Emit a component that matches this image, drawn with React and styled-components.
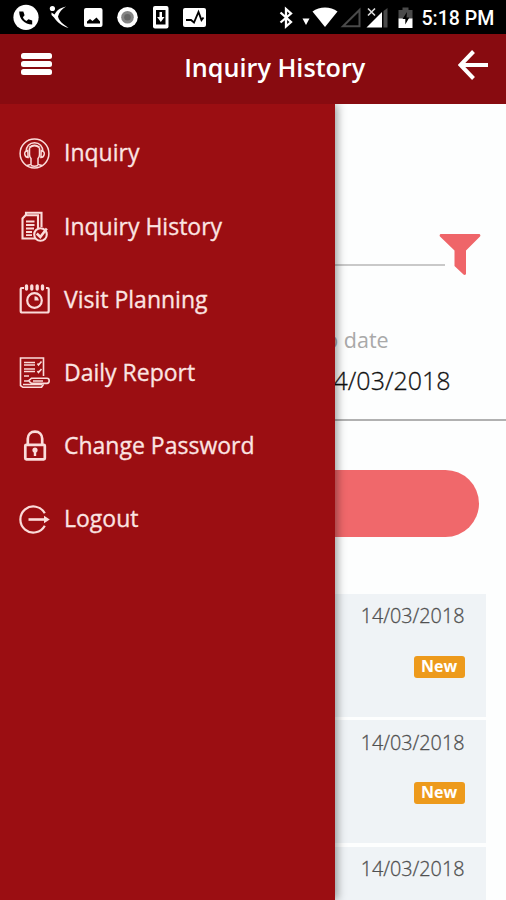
import React from "react";
import styled, { createGlobalStyle } from "styled-components";

const GlobalStyle = createGlobalStyle`
  * {
    box-sizing: border-box;
  }
  body {
    margin: 0;
    background: #fff;
    font-family: "Open Sans", sans-serif;
  }
`;

const Screen = styled.div`
  display: flex;
  flex-direction: column;
  width: 506px;
  height: 900px;
  overflow: hidden;
  background: #fdfefe;
`;

const StatusBar = styled.div`
  flex: none;
  display: flex;
  align-items: flex-start;
  height: 34px;
  background: #000;
`;

const StatusIcon = styled.svg`
  flex: none;
  display: block;
  width: ${(props) => props.$width}px;
  height: 34px;
  margin-left: ${(props) => props.$gap}px;
  fill: #fff;
`;

const Clock = styled.div`
  margin-left: 8px;
  font-family: Roboto, sans-serif;
  font-size: 19.5px;
  font-weight: 500;
  line-height: 37px;
  color: #fff;
  white-space: nowrap;
`;

const Header = styled.header`
  flex: none;
  display: flex;
  align-items: center;
  justify-content: space-between;
  height: 70px;
  padding: 0 18px 0 21px;
  background: #880b10;
`;

const MenuButton = styled.div`
  display: flex;
  flex-direction: column;
  gap: 2px;
  width: 30.5px;
  margin-bottom: 10px;
`;

const MenuBar = styled.span`
  height: 6px;
  border-radius: 2.5px;
  background: #fff;
`;

const Title = styled.h1`
  margin: 0 0 4px 40px;
  font-size: 25.2px;
  font-weight: 600;
  line-height: 34px;
  color: #fff;
`;

const BackIcon = styled.svg`
  width: 30px;
  height: 30px;
  margin-bottom: 9px;
  fill: none;
  stroke: #fff;
  stroke-width: 4;
`;

const Body = styled.div`
  flex: 1;
  position: relative;
  overflow: hidden;
`;

const Drawer = styled.nav`
  position: absolute;
  top: 0;
  left: 0;
  bottom: 0;
  width: 334.5px;
  padding-top: 12.5px;
  background: #9b0e12;
  box-shadow: 2px 0 9px rgba(0, 0, 0, 0.42);
`;

const DrawerItem = styled.div`
  display: flex;
  align-items: center;
  gap: 14px;
  height: 73.2px;
  padding-left: 19px;
  font-size: 23px;
  color: #fbe4e2;
  -webkit-text-stroke: 0.3px #fbe4e2;
  white-space: nowrap;
`;

const DrawerLabel = styled.span`
  padding-bottom: 1.4px;
`;

const DrawerIcon = styled.svg`
  flex: none;
  width: 31px;
  height: 31px;
  fill: none;
  stroke: #fbdcda;
  stroke-width: ${(props) => props.$stroke || 2.2};
`;

const Search = styled.div`
  display: flex;
  align-items: flex-start;
  height: 172px;
  padding: 129px 25px 0 20px;
`;

const SearchLine = styled.div`
  flex: 1;
  height: 2px;
  margin-top: 31px;
  background: #c9c9c9;
`;

const FunnelIcon = styled.svg`
  width: 42px;
  height: 43px;
  margin-left: -6px;
  fill: #ef6569;
`;

const Dates = styled.div`
  display: flex;
  justify-content: flex-end;
  height: 145px;
  padding: 47px 55.5px 0 20px;
  border-bottom: 2px solid #b1b1b1;
`;

const DateField = styled.div`
  display: flex;
  flex-direction: column;
  width: 137px;
`;

const DateLabel = styled.div`
  font-size: 21.5px;
  line-height: 34px;
  color: #a9a9a9;
  white-space: nowrap;
`;

const DateValue = styled.div`
  align-self: flex-end;
  margin-top: 5px;
  font-size: 25px;
  font-weight: 300;
  line-height: 36px;
  color: #111;
  -webkit-text-stroke: 0.3px #111;
`;

const SubmitButton = styled.div`
  height: 67px;
  margin: 49.4px 27.5px 56.6px;
  border-radius: 34px;
  background: #f0686b;
`;

const List = styled.div`
  display: flex;
  flex-direction: column;
  gap: 3.5px;
  padding: 0 20.5px;
`;

const Card = styled.div`
  display: flex;
  flex-direction: column;
  align-items: flex-end;
  height: 123px;
  padding: 8.5px 21px 0;
  background: #eff3f6;
`;

const CardDate = styled.div`
  font-size: 19.8px;
  font-weight: 300;
  line-height: 28px;
  color: #505050;
  -webkit-text-stroke: 0.3px #505050;
`;

const Badge = styled.div`
  width: 51px;
  height: 22px;
  margin-top: 25.5px;
  border-radius: 3px;
  background: #ed9a1c;
  font-size: 16px;
  font-weight: 700;
  line-height: 21px;
  text-align: center;
  color: #fff;
`;

const StatusIcons = () => {
  return (
    <>
      <StatusIcon $width={26} $gap={13} viewBox="13 0 26 34">
        <circle cx="26" cy="17.3" r="12.6" />
        <path
          d="M19.200 11.500c0 7.500 5.300 13 13 13v-4l-3.800-1.200-2 1.700c-1.600-.9-2.700-2-3.500-3.700l1.700-2-1.300-3.800z"
          fill="#000"
        />
      </StatusIcon>
      <StatusIcon $width={21} $gap={10} viewBox="49 0 21 34">
        <circle cx="52.4" cy="8.500" r="2.600" />
        <path d="M66 6.500C59 8 56.500 11 54.500 14.500l-3-2v2.500l2.500 2.500c4 5.500 8 8.500 14.500 10.500-5-4-9.500-6.500-10.500-11.500 1-4.500 4-7.500 8-10z" />
      </StatusIcon>
      <StatusIcon $width={19} $gap={14} viewBox="84 0 19 34">
        <rect x="84" y="8" width="18.500" height="19" rx="2" />
        <path d="M87 23.500v-2l3-2.500 2.500 2 4-3.500 3.500 4v2z" fill="#000" />
      </StatusIcon>
      <StatusIcon $width={21} $gap={13.5} viewBox="116.500 0 21 34">
        <circle cx="127" cy="17.300" r="10.300" />
        <circle cx="127" cy="17.300" r="6.300" fill="#858585" />
        <circle cx="127" cy="17.300" r="3.300" fill="#666" />
      </StatusIcon>
      <StatusIcon $width={16} $gap={15.5} viewBox="153 0 16 34">
        <rect x="153" y="6" width="15.500" height="22.500" rx="2" />
        <rect x="156" y="10" width="9.500" height="14.500" fill="#000" />
        <path d="M159.500 12h2.500v5h2.500l-3.700 5-3.700-5h2.400z" />
      </StatusIcon>
      <StatusIcon $width={23} $gap={14} viewBox="183 0 23 34">
        <rect x="183" y="8" width="23" height="19" rx="2" />
        <path
          d="M186 20h5l3 2.500 4.500-10.500 3 8 2-2.500"
          fill="none"
          stroke="#000"
          strokeWidth="1.900"
        />
      </StatusIcon>
      <StatusIcon $width={14} $gap={73} viewBox="279 0 14 34">
        <path
          d="M280.500 12.500l10.500 9.500-5 4.500V9l5 4.500-10.500 9"
          fill="none"
          stroke="#fff"
          strokeWidth="2.300"
        />
      </StatusIcon>
      <StatusIcon $width={8} $gap={9} viewBox="302 0 8 34">
        <path d="M302.500 18.500h7l-3.500 6.500z" />
      </StatusIcon>
      <StatusIcon $width={26} $gap={2} viewBox="312 0 26 34">
        <path d="M312.500 11.500c7-5.500 18-5.500 25 0L325 27z" />
      </StatusIcon>
      <StatusIcon $width={21} $gap={2} viewBox="340 0 21 34">
        <path
          d="M343 26.200L359.500 10v16.200z"
          fill="none"
          stroke="#4a4a4a"
          strokeWidth="2"
        />
      </StatusIcon>
      <StatusIcon $width={22} $gap={5} viewBox="366 0 22 34">
        <path d="M366.500 27.500L382 12v15.500z" />
        <path d="M383.500 11l4-3v19.500h-4z" fill="#4a4a4a" />
        <path
          d="M368 8.500l7 7m0-7l-7 7"
          fill="none"
          stroke="#ddd"
          strokeWidth="1.600"
        />
      </StatusIcon>
      <StatusIcon $width={16} $gap={9.5} viewBox="397.500 0 16 34">
        <path d="M398 10h4V7.500h6V10h4v9h-14z" fill="#4a4a4a" />
        <path d="M398 18.500h14V28h-14z" />
        <path d="M406.500 12l-4.500 7h2.800v5.500l4-7H406z" fill="#000" />
      </StatusIcon>
    </>
  );
};

const InquiryIcon = () => (
  <DrawerIcon viewBox="0 0 31 31" $stroke={1.5}>
    <circle cx="15.500" cy="15.500" r="14.400" />
    <path d="M7 14c0-5.500 3.500-9.200 8.500-9.200S24 8.500 24 14" />
    <path d="M10.500 9.500c3-2.500 7-2.500 10 0" strokeWidth="2" />
    <path d="M10.500 9.500v7c0 2 .5 3 1.500 4v6l-4 1M20.500 9.500v7c0 2-.5 3-1.500 4v6l4 1M12 27.500q3.500 1.500 7 0" />
    <path d="M8.800 12.500c-2.500.5-3.500 2-3 4s1.500 3 3.300 3zM22.200 12.500c2.500.5 3.500 2 3 4s-1.500 3-3.300 3z" />
  </DrawerIcon>
);

const HistoryIcon = () => (
  <DrawerIcon viewBox="0 0 31 31" $stroke={2.1}>
    <path d="M16 27.500H3.500v-20l3-3.300h12.500v13" />
    <path d="M7 4V1.800h15.500V16" />
    <path d="M7 10.500h8.500M7 14h8.500M7 17.500h8M7 21h6M7 24.200h6" strokeWidth="1.800" />
    <circle cx="21.500" cy="23.500" r="6.300" />
    <path d="M17.800 22.500l3.500 3.500 6.500-8.500" strokeWidth="2.600" />
  </DrawerIcon>
);

const PlanningIcon = () => (
  <DrawerIcon viewBox="0 0 31 31">
    <path d="M5 4H2.700Q1.700 4 1.700 5v22q0 1.500 1.500 1.500h25q1.500 0 1.500-1.500V5q0-1-1-1H27" />
    <path
      d="M7.500 2v3M12.800 2v3M18.200 2v3M23.500 2v3"
      strokeWidth="3.300"
      strokeLinecap="round"
    />
    <circle cx="15.500" cy="16.500" r="7.300" />
    <path d="M15.500 16.500v-4.300a4.300 4.300 0 0 1 4.300 4.300z" fill="#fbdcda" stroke="none" />
  </DrawerIcon>
);

const ReportIcon = () => (
  <DrawerIcon viewBox="0 0 31 31" $stroke={1.6}>
    <path d="M24.500 19V1H1.500v27.500L4 30.300h18.500l2-3" />
    <path d="M5 5.500h11M5 8h11M5 12h11M5 14.500h11M5 19h5M5 24h4" />
    <path d="M18.500 6.500l1 1.500 3-3.500M18.500 14l1 1.500 3-3.500" />
    <path d="M9.500 23.800l3-2.600h15.500q2.200 0 2.200 2.600T28 26.400H12.500z" />
    <path d="M14 24h10M4 27.500h19" />
  </DrawerIcon>
);

const LockIcon = () => (
  <DrawerIcon viewBox="0 0 31 31" $stroke={2.7}>
    <rect x="6.300" y="14.800" width="19.500" height="14.500" rx="1" />
    <path d="M8.800 14V8.800C8.800 4.500 11.700 1.700 16 1.700s7.200 2.800 7.200 7.100V14" />
    <circle cx="16" cy="20" r="2.600" fill="#fbdcda" stroke="none" />
    <path d="M16 20.500v5.500" strokeWidth="2.400" />
  </DrawerIcon>
);

const LogoutIcon = () => (
  <DrawerIcon viewBox="0 0 31 31">
    <path d="M25.800 9.300A13 13 0 1 0 25.800 21.700" />
    <path d="M9.500 15.500h17" strokeWidth="2.600" />
    <path d="M25 11.700l5.800 3.800-5.800 3.800z" fill="#fbdcda" stroke="none" />
  </DrawerIcon>
);

const menuItems = [
  { label: "Inquiry", Icon: InquiryIcon },
  { label: "Inquiry History", Icon: HistoryIcon },
  { label: "Visit Planning", Icon: PlanningIcon },
  { label: "Daily Report", Icon: ReportIcon },
  { label: "Change Password", Icon: LockIcon },
  { label: "Logout", Icon: LogoutIcon },
];

const inquiries = [
  { id: 1, date: "14/03/2018", status: "New" },
  { id: 2, date: "14/03/2018", status: "New" },
  { id: 3, date: "14/03/2018" },
];

const App = () => {
  return (
    <>
      <GlobalStyle />
      <Screen>
        <StatusBar>
          <StatusIcons />
          <Clock>5:18 PM</Clock>
        </StatusBar>
        <Header>
          <MenuButton>
            <MenuBar />
            <MenuBar />
            <MenuBar />
          </MenuButton>
          <Title>Inquiry History</Title>
          <BackIcon viewBox="0 0 30 30">
            <path d="M15.500 1.500L2.500 15l13 13.500M2.500 15H30" />
          </BackIcon>
        </Header>
        <Body>
          <Search>
            <SearchLine />
            <FunnelIcon viewBox="0 0 42 43">
              <path d="M1.500 1h39q1.500 1 .5 2.500L27 17.500V41q-1 1.500-2.500.5L15.500 33V17.500L1 3.500Q0 2 1.500 1z" />
            </FunnelIcon>
          </Search>
          <Dates>
            <DateField>
              <DateLabel>To date</DateLabel>
              <DateValue>14/03/2018</DateValue>
            </DateField>
          </Dates>
          <SubmitButton />
          <List>
            {inquiries.map((item) => (
              <Card key={item.id}>
                <CardDate>{item.date}</CardDate>
                {item.status && <Badge>{item.status}</Badge>}
              </Card>
            ))}
          </List>
          <Drawer>
            {menuItems.map(({ label, Icon }) => (
              <DrawerItem key={label}>
                <Icon />
                <DrawerLabel>{label}</DrawerLabel>
              </DrawerItem>
            ))}
          </Drawer>
        </Body>
      </Screen>
    </>
  );
};

export default App;
